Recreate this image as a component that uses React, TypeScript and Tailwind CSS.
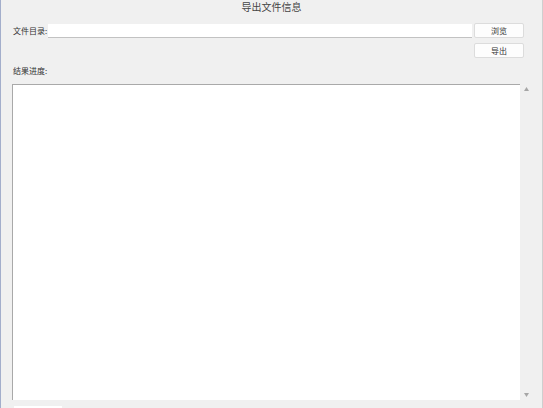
import React from 'react';

const font = { fontFamily: '"Noto Sans CJK SC", "Noto Sans", sans-serif' };

function SmallButton({ label }: { label: string }) {
  return (
    <button
      type="button"
      className="flex h-[15px] w-[50px] items-center justify-center rounded-[2px] border border-[#dcdcdc] bg-[#fdfdfd] text-[8px] leading-none text-[#333]"
    >
      {label}
    </button>
  );
}

export default function App() {
  return (
    <div
      style={font}
      className="flex h-[408px] w-[543px] flex-col overflow-hidden border-l border-r border-l-[#a3aecb] border-r-[#cfcfcf] bg-[#f0f0f0] text-[#333]"
    >
      <div className="flex h-[13px] items-center justify-center text-[10px] leading-none text-[#444]">导出文件信息</div>

      <div className="mt-[10px] flex items-center pl-[12px] pr-[18px]">
        <span className="w-[35px] text-[8px] leading-none">文件目录:</span>
        <input
          className="h-[14px] flex-1 border-b border-b-[#c2c2c2] bg-white px-1 text-[8px] outline-none"
          defaultValue=""
        />
        <div className="ml-[2px]">
          <SmallButton label="浏览" />
        </div>
      </div>

      <div className="mt-[5px] flex justify-end pr-[18px]">
        <SmallButton label="导出" />
      </div>

      <div className="mt-[9px] pl-[12px] text-[8px] leading-none">结果进度:</div>

      <div className="mt-[9px] ml-[11px] mr-[10px] flex h-[316px]">
        <textarea className="h-full flex-1 resize-none border-l border-t border-[#a9a9a9] bg-white p-1 text-[8px] outline-none" />
        <div className="flex w-[12px] flex-col items-center justify-between py-[3px]">
          <svg width="5" height="4" viewBox="0 0 5 4">
            <path d="M2.5 0 L5 4 L0 4 Z" fill="#a6a6a6" />
          </svg>
          <svg width="5" height="4" viewBox="0 0 5 4">
            <path d="M0 0 L5 0 L2.5 4 Z" fill="#a6a6a6" />
          </svg>
        </div>
      </div>

      <div className="mt-[6px] ml-[13px] h-[2px] w-[48px] bg-white" />
    </div>
  );
}
